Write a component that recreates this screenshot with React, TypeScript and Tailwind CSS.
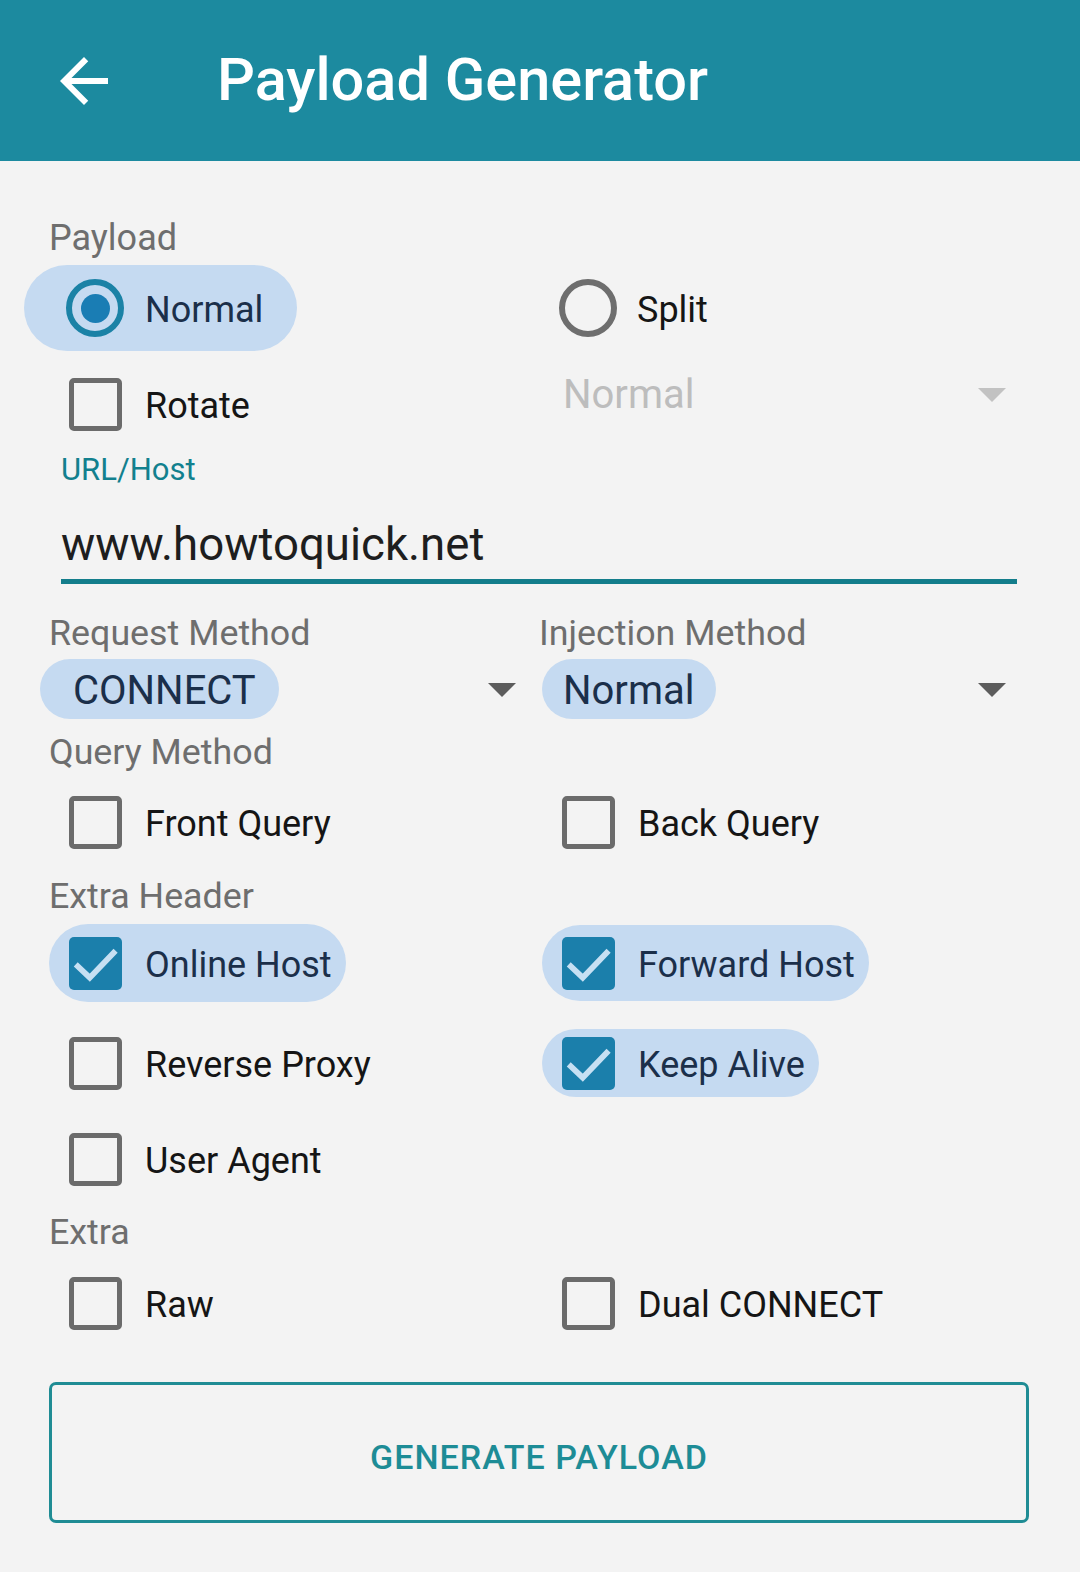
import React from "react";

function CheckBox({ checked }: { checked?: boolean }) {
  if (checked) {
    return (
      <div className="w-[53px] h-[53px] rounded-[5px] bg-[#1b7fab] shrink-0 flex items-center justify-center">
        <svg viewBox="0 0 24 24" className="w-[53px] h-[53px]">
          <path d="M4 13.3 L9.4 18.4 L20.2 7.2" stroke="#c6e0f3" strokeWidth="2.6" fill="none" strokeLinecap="square" />
        </svg>
      </div>
    );
  }
  return <div className="w-[53px] h-[53px] rounded-[5px] border-[5px] border-[#6b6b6b] shrink-0" />;
}

function Radio({ checked }: { checked?: boolean }) {
  if (checked) {
    return (
      <div className="w-[58px] h-[58px] rounded-full border-[6px] border-[#1b82a6] flex items-center justify-center shrink-0">
        <div className="w-[29px] h-[29px] rounded-full bg-[#1a7db4]" />
      </div>
    );
  }
  return <div className="w-[58px] h-[58px] rounded-full border-[6px] border-[#6e6e6e] shrink-0" />;
}

function CheckItem({
  label,
  checked,
  chipH = 78,
  right,
}: {
  label: string;
  checked?: boolean;
  chipH?: number;
  right?: boolean;
}) {
  return (
    <div className="flex items-center h-full">
      <div
        className={
          "inline-flex items-center rounded-full pl-[20px] pr-[14px] " +
          (right ? "ml-[3px] " : "") +
          (checked ? "bg-[#c5daf1] text-[#1b2f4a]" : "text-[#151515]")
        }
        style={{ height: chipH }}
      >
        <CheckBox checked={checked} />
        <span className="ml-[23px] mt-[4px] text-[36px] leading-none">{label}</span>
      </div>
    </div>
  );
}

function Arrow({ disabled }: { disabled?: boolean }) {
  return (
    <svg viewBox="0 0 28 14" className="w-[28px] h-[14px] mt-[2px]">
      <path d="M0 0 L28 0 L14 14 Z" fill={disabled ? "#c2c2c2" : "#5c5c5c"} />
    </svg>
  );
}

function SectionLabel({ children, className = "" }: { children: React.ReactNode; className?: string }) {
  return <div className={"h-[44px] leading-[44px] text-[35.8px] text-[#6e6e6e] " + className}>{children}</div>;
}

export default function App() {
  return (
    <div className="min-h-[1572px] w-[1080px] bg-[#f3f3f3] font-[Roboto,sans-serif]">
      <div className="h-[161px] bg-[#1c8a9f] flex items-center">
        <svg viewBox="0 0 24 24" className="w-[72px] h-[72px] ml-[48px]">
          <path d="M20 11H7.83l5.59-5.59L12 4l-8 8 8 8 1.41-1.41L7.83 13H20v-2z" fill="#ffffff" />
        </svg>
        <div className="ml-[97px] text-white text-[59.5px] font-medium leading-none">Payload Generator</div>
      </div>

      <div className="pl-[49px] pt-[53px]">
        <div className="h-[48px] leading-[48px] text-[36px] text-[#6e6e6e]">Payload</div>

        <div className="grid grid-cols-[490px_490px] h-[92px]">
          <div className="flex items-center">
            <div className="inline-flex items-center h-[86px] rounded-full bg-[#c5daf1] -ml-[25px] pl-[42px] pr-[34px]">
              <Radio checked />
              <span className="ml-[21px] mt-[4px] text-[36px] leading-none text-[#1b2f4a]">Normal</span>
            </div>
          </div>
          <div className="flex items-center">
            <div className="ml-[20px] flex items-center">
              <Radio />
              <span className="ml-[20px] mt-[4px] text-[36px] leading-none text-[#151515]">Split</span>
            </div>
          </div>
        </div>

        <div className="grid grid-cols-[490px_490px] h-[100px]">
          <CheckItem label="Rotate" />
          <div className="h-[80px] flex items-center justify-between pr-[23px]">
            <span className="ml-[24px] mt-[2px] text-[40px] leading-none text-[#bdbdbd]">Normal</span>
            <Arrow disabled />
          </div>
        </div>

        <div className="ml-[12px] h-[32px] leading-[32px] text-[31px] text-[#12808e]">URL/Host</div>
        <div className="ml-[12px] mt-[29px] h-[60px] leading-[60px] text-[45.6px] text-[#1e1e1e]">www.howtoquick.net</div>
        <div className="ml-[12px] mt-[4px] h-[5px] w-[956px] bg-[#137d8b]" />

        <div className="grid grid-cols-[490px_490px] mt-[27px]">
          <SectionLabel>Request Method</SectionLabel>
          <SectionLabel>Injection Method</SectionLabel>
        </div>

        <div className="grid grid-cols-[490px_490px] h-[68px]">
          <div className="flex items-center justify-between pr-[23px]">
            <div className="inline-flex items-center h-[60px] rounded-full bg-[#c5daf1] -ml-[9px] pl-[33px] pr-[23px]">
              <span className="text-[40px] leading-none mt-[3px] text-[#1b2f4a]">CONNECT</span>
            </div>
            <Arrow />
          </div>
          <div className="flex items-center justify-between pr-[23px]">
            <div className="inline-flex items-center h-[60px] rounded-full bg-[#c5daf1] ml-[3px] pl-[21px] pr-[22px]">
              <span className="text-[40px] leading-none mt-[3px] text-[#1b2f4a]">Normal</span>
            </div>
            <Arrow />
          </div>
        </div>

        <SectionLabel className="mt-[7px]">Query Method</SectionLabel>
        <div className="grid grid-cols-[490px_490px] h-[96px]">
          <CheckItem label="Front Query" />
          <CheckItem label="Back Query" right />
        </div>

        <SectionLabel className="mt-[4px]">Extra Header</SectionLabel>
        <div className="grid grid-cols-[490px_490px] h-[90px]">
          <CheckItem label="Online Host" checked />
          <CheckItem label="Forward Host" checked chipH={76} right />
        </div>
        <div className="grid grid-cols-[490px_490px] h-[96px] mt-[7px]">
          <CheckItem label="Reverse Proxy" />
          <CheckItem label="Keep Alive" checked chipH={68} right />
        </div>
        <div className="grid grid-cols-[490px_490px] h-[96px]">
          <CheckItem label="User Agent" />
          <div />
        </div>

        <SectionLabel className="mt-[3px]">Extra</SectionLabel>
        <div className="grid grid-cols-[490px_490px] h-[96px] mt-[1px]">
          <CheckItem label="Raw" />
          <CheckItem label="Dual CONNECT" right />
        </div>

        <div className="mt-[31px] w-[980px] h-[141px] border-[3px] border-[#1f8c94] rounded-[7px] flex items-center justify-center">
          <span className="text-[34px] font-medium tracking-[0.03em] text-[#1d8c96] leading-none pt-[8px]">GENERATE PAYLOAD</span>
        </div>
      </div>
    </div>
  );
}
